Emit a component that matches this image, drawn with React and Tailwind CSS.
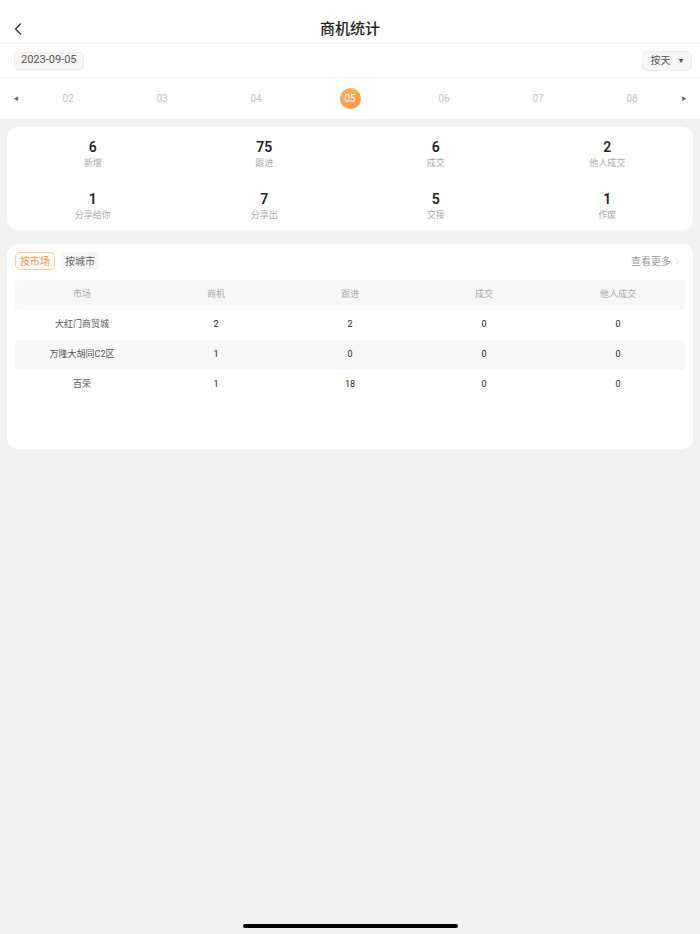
import { ChevronLeft, ChevronRight } from 'lucide-react'

const days = ['02', '03', '04', '05', '06', '07', '08']

const stats = [
  { n: '6', label: '新增' },
  { n: '75', label: '跟进' },
  { n: '6', label: '成交' },
  { n: '2', label: '他人成交' },
  { n: '1', label: '分享给你' },
  { n: '7', label: '分享出' },
  { n: '5', label: '交接' },
  { n: '1', label: '作废' },
]

const rows = [
  ['大红门商贸城', '2', '2', '0', '0'],
  ['万隆大胡同C2区', '1', '0', '0', '0'],
  ['百荣', '1', '18', '0', '0'],
]

const font = { fontFamily: 'Roboto, "Noto Sans CJK SC", sans-serif' }

export default function App() {
  return (
    <div className="relative w-[700px] h-[934px] bg-[#f2f2f2] overflow-hidden" style={font}>
      {/* nav */}
      <div className="bg-white h-[44px] pt-[14px] border-b border-[#f2f2f2] flex items-center relative">
        <ChevronLeft size={20} strokeWidth={1.6} className="text-[#333] ml-[8px]" />
        <div className="absolute left-0 right-0 top-[19px] text-center text-[15px] font-medium text-[#222] leading-5">商机统计</div>
      </div>

      {/* date row */}
      <div className="bg-white h-[34px] flex items-center justify-between px-[14px] pr-[8px] border-b border-[#f4f4f4]">
        <div className="h-[18px] px-[6px] flex items-center rounded-[4px] bg-[#f7f7f7] border border-[#ececec] text-[11px] text-[#555]">2023-09-05</div>
        <div className="h-[20px] w-[50px] flex items-center justify-center gap-[8px] rounded-[5px] bg-[#f7f7f7] border border-[#ececec] text-[10px] text-[#555]">
          <span>按天</span>
          <span className="text-[5px] text-[#555]">▼</span>
        </div>
      </div>

      {/* day selector */}
      <div className="bg-white h-[41px] flex items-center">
        <span className="w-[32px] text-center text-[5px] text-[#666]">◀</span>
        <div className="flex-1 grid grid-cols-7 ml-[-11px] mr-[-11px]">
          {days.map(d => (
            <div key={d} className="flex justify-center">
              {d === '05' ? (
                <div className="w-[21px] h-[21px] rounded-full bg-gradient-to-br from-[#ffb060] to-[#ff9640] text-white text-[10px] flex items-center justify-center">05</div>
              ) : (
                <div className="h-[21px] flex items-center text-[10px] text-[#c4c4c4]">{d}</div>
              )}
            </div>
          ))}
        </div>
        <span className="w-[32px] text-center text-[5px] text-[#666]">▶</span>
      </div>

      {/* stats card */}
      <div className="mx-[7px] mt-[8px] bg-white rounded-[10px] pt-[12px] pb-[8px] grid grid-cols-4 gap-y-[21px]">
        {stats.map((s, i) => (
          <div key={i} className="flex flex-col items-center">
            <div className="text-[14px] font-semibold text-[#222] leading-[17px]">{s.n}</div>
            <div className="text-[9px] text-[#aaa] leading-[13px] mt-[1px]">{s.label}</div>
          </div>
        ))}
      </div>

      {/* table card */}
      <div className="mx-[7px] mt-[14px] bg-white rounded-[10px] px-[8px] pt-[8px] h-[205px]">
        <div className="flex items-center justify-between">
          <div className="flex gap-[6px]">
            <div className="h-[18px] px-[4px] flex items-center rounded-[5px] border border-[#ffc89a] text-[#ff8f3a] text-[10px]">按市场</div>
            <div className="h-[18px] px-[4px] flex items-center rounded-[3px] bg-[#f5f5f5] text-[#666] text-[10px]">按城市</div>
          </div>
          <div className="flex items-center text-[10px] text-[#999] pr-[2px]">
            查看更多
            <ChevronRight size={11} strokeWidth={1.2} className="text-[#ccc] ml-[1px]" />
          </div>
        </div>

        <div className="mt-[10px]">
          <div className="grid grid-cols-5 h-[30px] items-center bg-[#f7f7f7] rounded-[4px] text-[9px] text-[#aaa] text-center">
            <div>市场</div>
            <div>商机</div>
            <div>跟进</div>
            <div>成交</div>
            <div>他人成交</div>
          </div>
          {rows.map((r, i) => (
            <div key={i} className={`grid grid-cols-5 h-[30px] items-center rounded-[4px] text-center text-[9px] ${i % 2 === 1 ? 'bg-[#f7f7f7]' : ''}`}>
              <div className="text-[#555]">{r[0]}</div>
              {r.slice(1).map((c, j) => (
                <div key={j} className="text-[#222]">{c}</div>
              ))}
            </div>
          ))}
        </div>
      </div>

      {/* home indicator */}
      <div className="absolute left-[243px] top-[924px] w-[215px] h-[4px] rounded-full bg-black" />
    </div>
  )
}
